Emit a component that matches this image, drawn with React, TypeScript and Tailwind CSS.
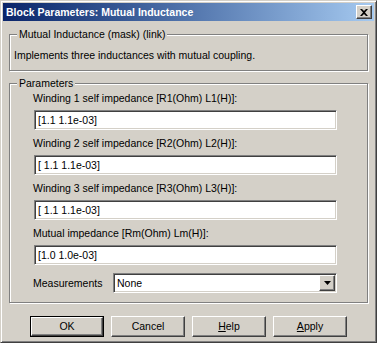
const sunken =
  'bg-white border border-t-[#808080] border-l-[#808080] border-b-white border-r-white shadow-[inset_1px_1px_0_#404040,inset_-1px_-1px_0_#d4d0c8]'
const raised =
  'bg-[#d4d0c8] border border-t-white border-l-white border-b-[#404040] border-r-[#404040] shadow-[inset_-1px_-1px_0_#808080,inset_1px_1px_0_#d4d0c8]'
const etched = 'relative border border-[#808080] shadow-[inset_1px_1px_0_#fff,1px_1px_0_#fff]'

function Field({ label, value }: { label: string; value: string }) {
  return (
    <div className="flex flex-col">
      <div className="h-[13px] leading-[13px] mb-[5px]">{label}</div>
      <div className={`${sunken} h-[20px] w-[303px] ml-[1px] flex items-center pl-[3px] leading-[13px]`}>{value}</div>
    </div>
  )
}

function Button({ children, isDefault }: { children: React.ReactNode; isDefault?: boolean }) {
  const inner = (
    <div className={`${raised} h-full w-full flex items-center justify-center leading-[13px]`}>{children}</div>
  )
  return (
    <div className={`w-[74px] h-[21px] ${isDefault ? 'border border-black' : ''}`}>{inner}</div>
  )
}

export default function App() {
  return (
    <div
      className="w-[377px] h-[343px] bg-[#d4d0c8] border border-t-[#d4d0c8] border-l-[#d4d0c8] border-b-[#404040] border-r-[#404040] shadow-[inset_1px_1px_0_#fff,inset_-1px_-1px_0_#808080] p-[2px] flex flex-col text-[10.5px] text-black"
      style={{ fontFamily: '"Liberation Sans", Arial, sans-serif' }}
    >
      {/* Title bar */}
      <div className="h-[18px] flex items-center justify-between pl-[3px] pr-[2px] bg-linear-to-r from-[#0a246a] to-[#a6caf0]">
        <span className="text-white font-bold text-[10.5px] leading-[13px]">Block Parameters: Mutual Inductance</span>
        <div className={`${raised} w-[16px] h-[14px] flex items-center justify-center`}>
          <svg width="8" height="7" viewBox="0 0 8 7">
            <path d="M0 0h2l2 2 2-2h2L5 3.5 8 7H6L4 5 2 7H0l3-3.5z" fill="#000" />
          </svg>
        </div>
      </div>

      <div className="flex flex-col px-[6px]">
        {/* Mask description */}
        <div className={`${etched} mt-[13px] h-[37px] pl-[4px] pt-[14px]`}>
          <span className="absolute left-[7px] -top-[7px] px-[2px] bg-[#d4d0c8] leading-[13px]">
            Mutual Inductance (mask) (link)
          </span>
          <div className="leading-[13px]">Implements three inductances with mutual coupling.</div>
        </div>

        {/* Parameters */}
        <div className={`${etched} mt-[12px] h-[220px] pl-[23px] pt-[8px] flex flex-col`}>
          <span className="absolute left-[7px] -top-[7px] px-[2px] bg-[#d4d0c8] leading-[13px]">Parameters</span>
          <div className="flex flex-col gap-[7px]">
            <Field label="Winding 1 self impedance [R1(Ohm) L1(H)]:" value="[1.1 1.1e-03]" />
            <Field label="Winding 2 self impedance [R2(Ohm) L2(H)]:" value="[ 1.1 1.1e-03]" />
            <Field label="Winding 3 self impedance [R3(Ohm) L3(H)]:" value="[ 1.1 1.1e-03]" />
            <Field label="Mutual impedance [Rm(Ohm) Lm(H)]:" value="[1.0 1.0e-03]" />
          </div>
          <div className="flex items-center mt-[8px] w-[304px]">
            <span className="flex-1 leading-[13px]">Measurements</span>
            <div className={`${sunken} w-[224px] h-[20px] flex items-center justify-between pl-[3px] pr-[1px]`}>
              <span className="leading-[13px]">None</span>
              <div className={`${raised} w-[16px] h-[16px] flex items-center justify-center`}>
                <svg width="7" height="4" viewBox="0 0 7 4">
                  <path d="M0 0h7L3.5 4z" fill="#000" />
                </svg>
              </div>
            </div>
          </div>
        </div>

        {/* Buttons */}
        <div className="flex justify-center gap-[7px] mt-[13px]">
          <Button isDefault>OK</Button>
          <Button>Cancel</Button>
          <Button>
            <span>
              <span className="underline">H</span>elp
            </span>
          </Button>
          <Button>
            <span>
              <span className="underline">A</span>pply
            </span>
          </Button>
        </div>
      </div>
    </div>
  )
}
